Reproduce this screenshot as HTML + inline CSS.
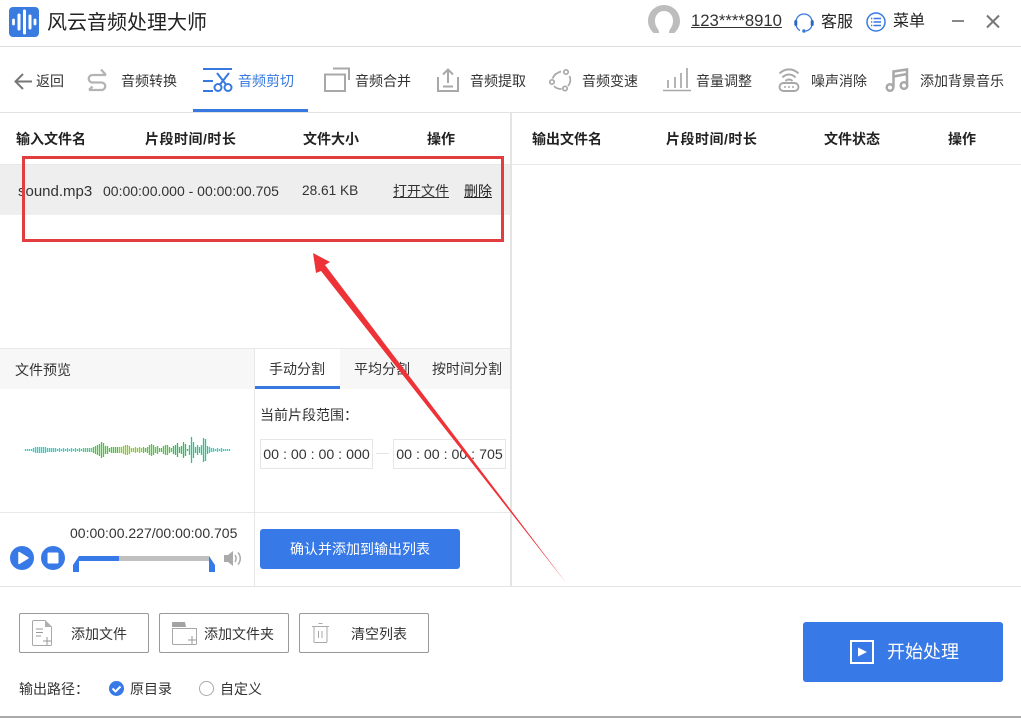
<!DOCTYPE html>
<html lang="zh"><head><meta charset="utf-8"><title>风云音频处理大师</title>
<style>
html,body{margin:0;padding:0;background:#fff}
body{width:1021px;height:718px;position:relative;overflow:hidden;font-family:"Liberation Sans","Noto Sans CJK SC",sans-serif;font-size:14px;color:#333}
.t{position:absolute;white-space:nowrap;line-height:20px;height:20px}
.b{font-weight:700;color:#222}
.r{position:absolute}
svg{position:absolute;overflow:visible}
.s{fill:none;stroke:#a8a8a8;stroke-width:2}
.btn{position:absolute;top:613px;width:128px;height:38px;border:1px solid #999;border-radius:2px;box-sizing:content-box}
.tb{position:absolute;top:439px;width:111px;height:28px;border:1px solid #e6e6e6;line-height:31px;text-align:center;font-size:14.2px;color:#333;white-space:nowrap}
</style></head><body>

<!-- lines and panels -->
<div class="r" style="left:0;top:46px;width:1021px;height:1px;background:#ddd"></div>
<div class="r" style="left:0;top:112px;width:1021px;height:1px;background:#e2e2e2"></div>
<div class="r" style="left:193px;top:109px;width:115px;height:3px;background:#3779e0"></div>
<div class="r" style="left:0;top:164px;width:511px;height:1px;background:#e8e8e8"></div>
<div class="r" style="left:512px;top:164px;width:509px;height:1px;background:#e8e8e8"></div>
<div class="r" style="left:0;top:165px;width:511px;height:50px;background:#eee"></div>
<div class="r" style="left:510px;top:113px;width:2px;height:473px;background:#e4e4e4"></div>
<div class="r" style="left:0;top:348px;width:510px;height:1px;background:#e8e8e8"></div>
<div class="r" style="left:0;top:349px;width:254px;height:40px;background:#f7f7f7"></div>
<div class="r" style="left:340px;top:349px;width:170px;height:40px;background:#f7f7f7"></div>
<div class="r" style="left:255px;top:386px;width:85px;height:3px;background:#3779e0"></div>
<div class="r" style="left:254px;top:349px;width:1px;height:237px;background:#e8e8e8"></div>
<div class="r" style="left:0;top:512px;width:510px;height:1px;background:#e8e8e8"></div>
<div class="r" style="left:0;top:586px;width:1021px;height:1px;background:#e4e4e4"></div>
<div class="r" style="left:0;top:716px;width:1021px;height:2px;background:#aaa"></div>

<!-- title bar -->
<svg style="left:9px;top:7px" width="30" height="30" viewBox="0 0 30 30"><rect width="30" height="30" rx="4" fill="#3a7be0"/><g stroke="#fff" stroke-linecap="round" fill="none"><path d="M4.500 13v4" stroke-width="2.800"/><path d="M10 8v14" stroke-width="3"/><path d="M15.500 4v22" stroke-width="3"/><path d="M21 9v12" stroke-width="3"/><path d="M26 13v4" stroke-width="2.800"/></g></svg>
<div class="t" style="left:47px;top:11px;font-size:20px;line-height:24px;height:24px;color:#222">风云音频处理大师</div>

<svg style="left:648px;top:5px" width="32" height="29" viewBox="0 0 32 29"><path fill="#bdbdbd" d="M11 28H5.500C2 24.500 0 20.500 0 16 0 7 7 0 16 0s16 7 16 16c0 4.500-2 8.500-5.500 12H21c0-2 .5-3 1.500-4.500 1.500-2 2.500-4.500 2.500-8C25 10 21 6 16 6s-9 4-9 9.500c0 3.500 1 6 2.500 8C10.500 25 11 26 11 28z"/></svg>
<div class="t" style="left:691px;top:11px;font-size:16.7px;line-height:20px;color:#333;text-decoration:underline">123****8910</div>

<svg style="left:794px;top:12px" width="20" height="21" viewBox="0 0 20 21"><path d="M2 10a8 8 0 0 1 16 0M18 13c-.5 3-3 5.500-6 6M2 13c.5 2.500 2 4.500 4 5.500" fill="none" stroke="#3779e0" stroke-width="1.300"/><rect x="0.300" y="8" width="3" height="6" rx="1.500" fill="#2e66c4"/><rect x="16.700" y="8" width="3" height="6" rx="1.500" fill="#2e66c4"/><circle cx="10" cy="19" r="1.800" fill="#3779e0"/></svg>
<div class="t" style="left:821px;top:13px;font-size:16px;color:#222">客服</div>

<svg style="left:866px;top:12px" width="20" height="20" viewBox="0 0 20 20"><circle cx="10" cy="10" r="9" fill="none" stroke="#3779e0" stroke-width="1.500"/><path d="M7.500 6.500h7.500M7.500 10h7.500M7.500 13.500h7.500" stroke="#3779e0" stroke-width="1.400"/><path d="M5 6.500h1.300M5 10h1.300M5 13.500h1.300" stroke="#3779e0" stroke-width="1.400"/></svg>
<div class="t" style="left:893px;top:12px;font-size:16px;color:#222">菜单</div>
<div class="r" style="left:952px;top:20px;width:12px;height:2px;background:#888"></div>
<svg style="left:986px;top:15px" width="14" height="13" viewBox="0 0 14 13"><path d="M1 .5l12 12M13 .5l-12 12" stroke="#777" stroke-width="2"/></svg>

<!-- nav -->
<svg style="left:14px;top:73px" width="19" height="17" viewBox="0 0 19 17"><path d="M18 8.500H2M9 1 1.500 8.500 9 16" fill="none" stroke="#777" stroke-width="2"/></svg>
<div class="t" style="left:36px;top:71px">返回</div>

<svg style="left:86px;top:68px" width="22" height="24" viewBox="0 0 22 24"><path d="M20 7H6.500a3.700 3.700 0 0 0 0 7.500h9a3.700 3.700 0 0 1 0 7.500H3M15 1.500 20 7M3 22l5 0M3 22l3.500-3.500" fill="none" stroke="#b4b4b4" stroke-width="2.300"/></svg>
<div class="t" style="left:121px;top:71px">音频转换</div>

<svg style="left:203px;top:67px" width="30" height="26" viewBox="0 0 30 26"><g fill="none" stroke="#3779e0" stroke-width="2"><path d="M0 2h29M0 14h10M0 24h10"/><circle cx="15" cy="20.500" r="3.500"/><circle cx="25" cy="20.500" r="3.500"/><path d="M17 17.500 26 6M23 17.500 14 6"/></g></svg>
<div class="t" style="left:238px;top:71px;color:#3779e0">音频剪切</div>

<svg style="left:324px;top:67px" width="26" height="26" viewBox="0 0 26 26"><path class="s" d="M1 7.500h20V24H1zM9 1.500h16V13"/></svg>
<div class="t" style="left:355px;top:71px">音频合并</div>

<svg style="left:437px;top:68px" width="22" height="25" viewBox="0 0 22 25"><path class="s" d="M1 9v14h20V9M11 15V1.500M6 6.500l5-5 5 5M6 18.500h10"/></svg>
<div class="t" style="left:470px;top:71px">音频提取</div>

<svg style="left:549px;top:68px" width="22" height="25" viewBox="0 0 22 25"><g class="s" style="stroke-width:1.700"><circle cx="3" cy="14" r="2.200"/><circle cx="17" cy="4" r="2.200"/><circle cx="16" cy="20.500" r="2.200"/><path d="M3.500 10.500C5 7 8 4.500 12 3.500M20.500 8c1.500 3.500 1 7-1.500 10M5 18c1.500 2 3.500 3 7.500 3"/></g></svg>
<div class="t" style="left:582px;top:71px">音频变速</div>

<svg style="left:663px;top:68px" width="28" height="24" viewBox="0 0 28 24"><path d="M0 22.500h28" stroke="#a8a8a8" stroke-width="1.600"/><path d="M5 12v8M12 9v11M18 5v15M24 0v20" stroke="#a8a8a8" stroke-width="1.700"/></svg>
<div class="t" style="left:696px;top:71px">音量调整</div>

<svg style="left:778px;top:68px" width="22" height="24" viewBox="0 0 22 24"><g fill="none" stroke="#a8a8a8" stroke-width="1.900"><path d="M1.500 5.500c5.500-5.500 13.500-5.500 19 0M4.500 9.500c3.500-4 9.500-4 13 0M7.500 13c2-2 5-2 7 0"/><rect x="1.500" y="15" width="19" height="8" rx="4"/></g><path d="M6 19h2M10 19h2M14 19h2" stroke="#a8a8a8" stroke-width="1.600"/></svg>
<div class="t" style="left:811px;top:71px">噪声消除</div>

<svg style="left:885px;top:68px" width="24" height="25" viewBox="0 0 24 25"><g fill="none" stroke="#a8a8a8" stroke-width="2.500"><circle cx="5" cy="19.500" r="3.300"/><circle cx="19" cy="17.500" r="3.300"/><path d="M8.500 19V3.500L22 1.500V17"/></g><path d="M8.500 8.500 22 6" stroke="#a8a8a8" stroke-width="2.500"/></svg>
<div class="t" style="left:920px;top:71px">添加背景音乐</div>

<!-- tables -->
<div class="t b" style="left:16px;top:129px">输入文件名</div>
<div class="t b" style="left:145px;top:129px;letter-spacing:.5px">片段时间/时长</div>
<div class="t b" style="left:303px;top:129px">文件大小</div>
<div class="t b" style="left:427px;top:129px">操作</div>
<div class="t b" style="left:532px;top:129px">输出文件名</div>
<div class="t b" style="left:666px;top:129px;letter-spacing:.5px">片段时间/时长</div>
<div class="t b" style="left:824px;top:129px">文件状态</div>
<div class="t b" style="left:948px;top:129px">操作</div>

<div class="t" style="left:18px;top:182px;font-size:15px">sound.mp3</div>
<div class="t" style="left:103px;top:181px">00:00:00.000 - 00:00:00.705</div>
<div class="t" style="left:302px;top:181px;font-size:13.7px">28.61 KB</div>
<div class="t" style="left:393px;top:181px;text-decoration:underline">打开文件</div>
<div class="t" style="left:464px;top:181px;text-decoration:underline;color:#222">删除</div>

<!-- preview -->
<div class="t" style="left:15px;top:360px">文件预览</div>
<svg style="left:0;top:0" width="240" height="470"><g transform="translate(.5 0)" stroke-width="1.300" fill="none">
<path stroke="#2fd0c0" d="M25 449v2M27 449v2M29 449v2M31 449v2M33 448v4M35 447v6M37 447v6M39 447v6M41 447v6M43 447v6M45 447v6M47 448v4M49 448v4M51 448v4M53 448v4M55 448v4M57 449v2M59 448v4M61 449v2M63 448v4M65 449v2M67 448v4M69 449v2M71 448v4M73 449v2M75 448v4"/>
<path stroke="#45cc8a" d="M77 449v2M79 448v4M81 449v2M83 448v4M85 448v4M87 448v4M89 448v4M91 448v4"/>
<path stroke="#46c63c" d="M93 447v6M95 446v8M97 445v10M99 444v12M101 442v16M103 443v14M105 446v8M107 446v8M109 448v4M111 447v6M113 447v6M115 447v6M117 447v6"/>
<path stroke="#8ccb30" d="M119 447v6M121 447v6M123 446v8M125 445v10M127 445v10M129 446v8M131 448v4M133 448v4M135 447v6M137 448v4M139 447v6M141 448v4"/>
<path stroke="#4cc640" d="M143 447v6M145 448v4M147 447v6M149 445v10M151 444v12M153 445v10M155 447v6M157 446v8M159 448v4M161 448v4M163 446v8M165 445v10M167 445v10M169 447v6M171 448v4"/>
<path stroke="#2cbe5c" d="M173 446v8M175 445v10M177 443v14M179 447v6M181 446v8M183 442v16M185 444v12M187 449v2"/>
<path stroke="#28c48c" d="M189 445v10M191 437v26M193 442v16M195 447v6M197 445v10M199 447v6M201 445v10M203 438v24M205 439v22M207 446v8"/>
<path stroke="#2fd0c0" d="M209 447v6M211 448v4M213 448v4M215 449v2M217 448v4M219 449v2M221 448v4M223 449v2M225 449v2M227 449v2M229 449v2"/>
</g></svg>

<div class="t" style="left:70px;top:523px">00:00:00.227/00:00:00.705</div>
<svg style="left:10px;top:546px" width="24" height="24" viewBox="0 0 24 24"><circle cx="12" cy="12" r="12" fill="#3779e6"/><path d="M9 6.500 18 12 9 17.500z" fill="#fff" stroke="#fff" stroke-width="1.500" stroke-linejoin="round"/></svg>
<svg style="left:41px;top:546px" width="24" height="24" viewBox="0 0 24 24"><circle cx="12" cy="12" r="12" fill="#3779e6"/><rect x="6.500" y="6.500" width="11" height="11" rx="1" fill="#fff"/></svg>
<div class="r" style="left:79px;top:556px;width:130px;height:5px;background:#c0c0c0"></div>
<div class="r" style="left:79px;top:556px;width:40px;height:5px;background:#3779e6"></div>
<svg style="left:73px;top:556px" width="142" height="16" viewBox="0 0 142 16"><path d="M6 0 0 9v7h6zM136 0l6 9v7h-6z" fill="#3779e6"/></svg>
<svg style="left:224px;top:551px" width="18" height="15" viewBox="0 0 18 15"><path d="M0 4h4l5-4v15l-5-4H0z" fill="#aaa"/><path d="M11 4c1.500 2 1.500 5 0 7M14 1.500c3 3.500 3 8.500 0 12" fill="none" stroke="#aaa" stroke-width="1.500"/></svg>

<!-- tabs -->
<div class="t" style="left:269px;top:359px">手动分割</div>
<div class="t" style="left:354px;top:359px">平均分割</div>
<div class="t" style="left:432px;top:359px">按时间分割</div>
<div class="t" style="left:260px;top:405px">当前片段范围：</div>
<div class="tb" style="left:260px">00 : 00 : 00 : 000</div>
<div class="r" style="left:376px;top:453px;width:13px;height:1px;background:#e4e4e4"></div>
<div class="tb" style="left:393px">00 : 00 : 00 : 705</div>
<div class="r" style="left:260px;top:529px;width:200px;height:40px;background:#3779e6;border-radius:3px;color:#fff;text-align:center;line-height:40px;font-size:14px">确认并添加到输出列表</div>

<!-- bottom buttons -->
<div class="btn" style="left:19px"></div>
<div class="btn" style="left:159px"></div>
<div class="btn" style="left:299px"></div>
<svg style="left:32px;top:620px" width="21" height="26" viewBox="0 0 21 26"><path d="M.5 1.500a1 1 0 0 1 1-1H13l6.500 6.500v17.500a1 1 0 0 1-1 1h-17a1 1 0 0 1-1-1z" fill="#fff" stroke="#a8a8a8"/><path d="M13 .5 19.500 7H13z" fill="#b0b0b0"/><path d="M4 9h7M4 12.500h7M4 16h5" stroke="#999"/><path d="M15 17v8M11 21h8" stroke="#999"/></svg>
<div class="t" style="left:71px;top:624px">添加文件</div>
<svg style="left:172px;top:622px" width="26" height="23" viewBox="0 0 26 23"><path d="M.5 6.500h24v15a1 1 0 0 1-1 1h-22a1 1 0 0 1-1-1z" fill="#fff" stroke="#a8a8a8"/><path d="M0 1a1 1 0 0 1 1-1h12l1 5H0z" fill="#a3a3a3"/><path d="M20 14v8M16 18h8" stroke="#999"/></svg>
<div class="t" style="left:204px;top:624px">添加文件夹</div>
<svg style="left:312px;top:623px" width="18" height="21" viewBox="0 0 18 21"><path d="M0 3.500h17M6.500 .5h4" stroke="#a8a8a8"/><path d="M2 3.500v15a1 1 0 0 0 1 1h11a1 1 0 0 0 1-1v-15" fill="none" stroke="#a8a8a8"/><path d="M6.500 8v7M10 8v7" stroke="#a8a8a8"/></svg>
<div class="t" style="left:351px;top:624px">清空列表</div>

<div class="t" style="left:19px;top:679px">输出路径：</div>
<svg style="left:109px;top:681px" width="15" height="15" viewBox="0 0 15 15"><circle cx="7.500" cy="7.500" r="7.500" fill="#3779e6"/><path d="M3.500 7.500l3 3 5-5" fill="none" stroke="#fff" stroke-width="2"/></svg>
<div class="t" style="left:130px;top:679px">原目录</div>
<svg style="left:199px;top:681px" width="15" height="15" viewBox="0 0 15 15"><circle cx="7.500" cy="7.500" r="7" fill="#fff" stroke="#aaa"/></svg>
<div class="t" style="left:220px;top:679px">自定义</div>

<div class="r" style="left:803px;top:622px;width:200px;height:60px;background:#3779e6;border-radius:3px"></div>
<svg style="left:850px;top:640px" width="24" height="24" viewBox="0 0 24 24"><rect x="1" y="1" width="22" height="22" fill="none" stroke="#fff" stroke-width="2"/><path d="M8 7.500l9 4.500-9 4.500z" fill="#fff"/></svg>
<div class="t" style="left:887px;top:640px;font-size:18px;line-height:24px;height:24px;color:#fff">开始处理</div>

<!-- annotations -->
<div class="r" style="left:22px;top:156px;width:476px;height:80px;border:3px solid #e23e40"></div>
<svg style="left:0;top:0" width="1021" height="718"><polygon points="313,253 330,262 325,265 567,584 321,271 316,273" fill="#ee3338"/></svg>
</body></html>
